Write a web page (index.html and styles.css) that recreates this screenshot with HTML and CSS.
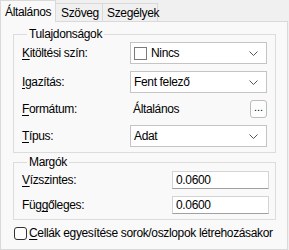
FILE: index.html
```html
<!DOCTYPE html>
<html lang="hu">
<head>
  <meta charset="UTF-8">
  <title>Cellatulajdonságok</title>
  <link rel="stylesheet" href="styles.css">
</head>
<body>
<div class="tabs">
  <div class="tab active">Általános</div>
  <div class="tab">Szöveg</div>
  <div class="tab">Szegélyek</div>
</div>

<div class="panel">
  <fieldset class="group props">
    <legend>Tulajdonságok</legend>

    <div class="row">
      <label><u>K</u>itöltési szín:</label>
      <div class="combo">
        <span class="swatch"></span>
        <span class="value">Nincs</span>
        <svg class="chev" width="9" height="5" viewBox="0 0 9 5"><path d="M0.5 0.5 L4.5 4.5 L8.5 0.5" fill="none" stroke="#555" stroke-width="1"/></svg>
      </div>
    </div>

    <div class="row">
      <label><u>I</u>gazítás:</label>
      <div class="combo">
        <span class="value">Fent felező</span>
        <svg class="chev" width="9" height="5" viewBox="0 0 9 5"><path d="M0.5 0.5 L4.5 4.5 L8.5 0.5" fill="none" stroke="#555" stroke-width="1"/></svg>
      </div>
    </div>

    <div class="row short">
      <label><u>F</u>ormátum:</label>
      <div class="plain">
        <span class="value">Általános</span>
        <button type="button" class="dots">...</button>
      </div>
    </div>

    <div class="row">
      <label><u>T</u>ípus:</label>
      <div class="combo">
        <span class="value">Adat</span>
        <svg class="chev" width="9" height="5" viewBox="0 0 9 5"><path d="M0.5 0.5 L4.5 4.5 L8.5 0.5" fill="none" stroke="#555" stroke-width="1"/></svg>
      </div>
    </div>
  </fieldset>

  <fieldset class="group margins">
    <legend>Margók</legend>
    <div class="row short">
      <label><u>V</u>ízszintes:</label>
      <input type="text" class="num" value="0.0600">
    </div>
    <div class="row short">
      <label>Füg<u>g</u>őleges:</label>
      <input type="text" class="num" value="0.0600">
    </div>
  </fieldset>

  <div class="check">
    <span class="box"></span>
    <span class="check-text"><u>C</u>ellák egyesítése sorok/oszlopok létrehozásakor</span>
  </div>
</div>
</body>
</html>
```

FILE: styles.css
```css
body {
  margin: 0;
  background-color: #f0f0f0;
  font-family: "Liberation Sans", Arial, sans-serif;
  font-size: 12px;
  letter-spacing: -0.35px;
  color: #000;
  overflow: hidden;
}
u {
  text-decoration-thickness: 1px;
  text-underline-offset: 2px;
}
.tabs {
  display: flex;
  align-items: flex-end;
  height: 21px;
}
.tab {
  height: 18px;
  line-height: 19px;
  box-sizing: border-box;
  padding-left: 5px;
  background: #f0f0f0;
  border: 1px solid #d9d9d9;
  border-bottom: none;
  margin-left: -1px;
}
.tab:nth-child(2) {
  width: 48px;
}
.tab:nth-child(3) {
  width: 56px;
  padding-left: 4px;
}
.tab.active {
  width: 56px;
  height: 22px;
  line-height: 22px;
  margin-left: 0;
  padding-left: 4px;
  background: #f9f9f9;
  position: relative;
  margin-bottom: -1px;
  z-index: 1;
}
.panel {
  background: #f9f9f9;
  border: 1px solid #d9d9d9;
  box-sizing: border-box;
  width: 288px;
  height: 229px;
  padding-top: 5px;
}
.group {
  min-width: 0;
  margin: 0 11px 0 12px;
  padding: 1px 8px 5px 8px;
  border: 1px solid #dcdcdc;
  display: flex;
  flex-direction: column;
  gap: 7px;
}
.group legend {
  padding: 0 2px;
  margin-left: 5px;
  line-height: 14px;
}
.margins {
  margin-top: 2px;
  padding: 2px 6px 5px 8px;
}
.row {
  display: flex;
  align-items: center;
  height: 22px;
}
.row.short {
  height: 18px;
}
.row label {
  width: 108px;
  flex: none;
}
.margins .row label {
  width: 150px;
}
.combo {
  flex: 1;
  height: 22px;
  box-sizing: border-box;
  background: #fff;
  border: 1px solid #c4c4c4;
  display: flex;
  align-items: center;
  padding: 0 8px 0 3px;
}
.combo .value {
  flex: 1;
}
.swatch {
  width: 13px;
  height: 13px;
  box-sizing: border-box;
  border: 1px solid #7a7a7a;
  background: #fff;
  margin-right: 4px;
}
.plain {
  flex: 1;
  display: flex;
  align-items: center;
  padding-left: 3px;
}
.plain .value {
  flex: 1;
}
.dots {
  width: 17px;
  height: 18px;
  padding: 0 0 4px 0;
  border: 1px solid #bcbcbc;
  border-radius: 3px;
  background: #fdfdfd;
  font-family: inherit;
  font-size: 11px;
  line-height: 10px;
  letter-spacing: 0;
}
.num {
  flex: 1;
  width: 0;
  min-width: 0;
  height: 18px;
  box-sizing: border-box;
  margin: 0;
  border: 1px solid #d4d4d4;
  border-bottom-color: #a0a0a0;
  background: #fff;
  padding: 0 3px;
  font-family: inherit;
  font-size: 12px;
  letter-spacing: -0.35px;
}
.check {
  display: flex;
  align-items: center;
  gap: 2px;
  margin: 6px 0 0 13px;
}
.check .box {
  flex: none;
  width: 13px;
  height: 13px;
  box-sizing: border-box;
  border: 1px solid #333;
  border-radius: 3px;
  background: #fff;
}
.check-text {
  white-space: nowrap;
}
```
